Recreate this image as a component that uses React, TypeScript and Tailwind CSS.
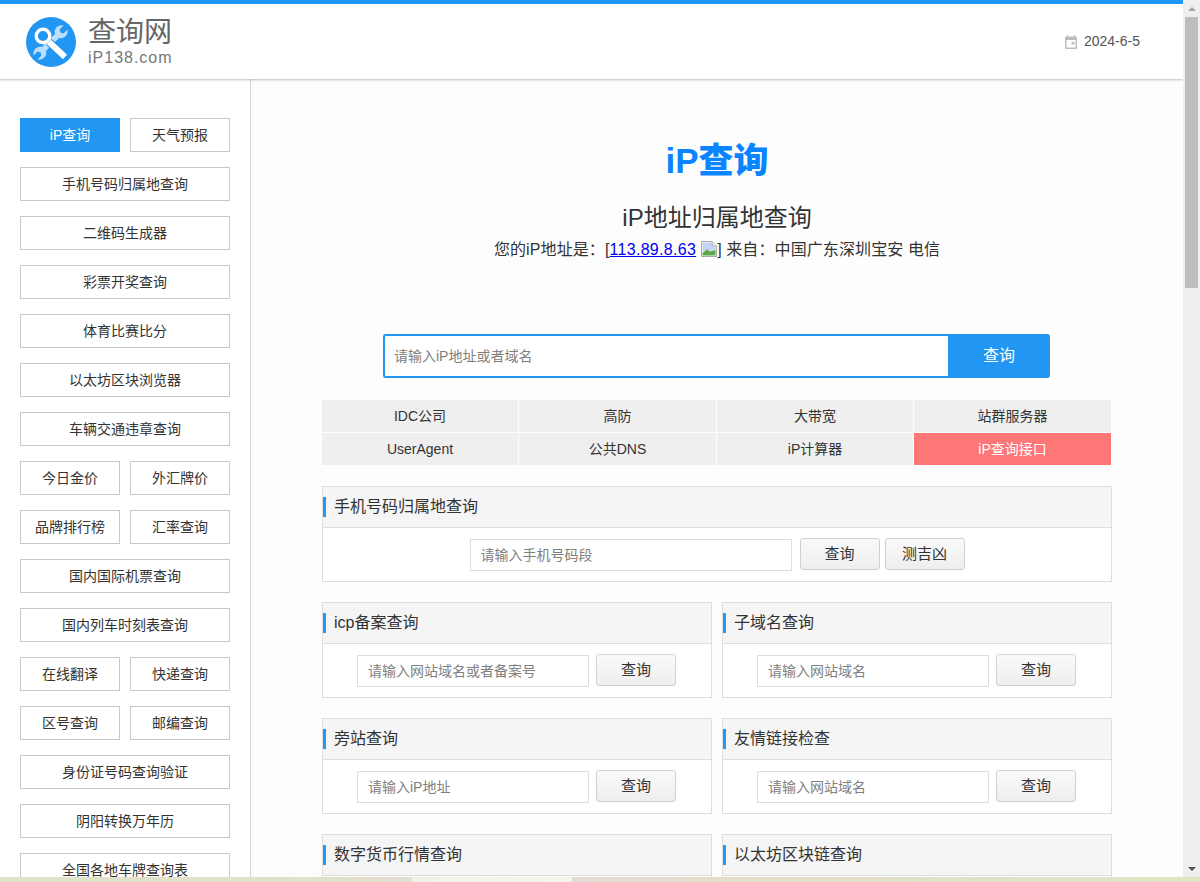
const font = "font-['Liberation_Sans','Noto_Sans_CJK_SC',sans-serif]";

function SideBtn({ text, active }: { text: string; active?: boolean }) {
  return (
    <a
      className={
        active
          ? "flex h-[34px] flex-1 items-center justify-center border border-[#2196f3] bg-[#2196f3] text-[14px] text-white"
          : "flex h-[34px] flex-1 items-center justify-center border border-[#c8c8c8] bg-white text-[14px] text-[#333]"
      }
    >
      {text}
    </a>
  );
}

const sideRows: { text: string; active?: boolean }[][] = [
  [{ text: "iP查询", active: true }, { text: "天气预报" }],
  [{ text: "手机号码归属地查询" }],
  [{ text: "二维码生成器" }],
  [{ text: "彩票开奖查询" }],
  [{ text: "体育比赛比分" }],
  [{ text: "以太坊区块浏览器" }],
  [{ text: "车辆交通违章查询" }],
  [{ text: "今日金价" }, { text: "外汇牌价" }],
  [{ text: "品牌排行榜" }, { text: "汇率查询" }],
  [{ text: "国内国际机票查询" }],
  [{ text: "国内列车时刻表查询" }],
  [{ text: "在线翻译" }, { text: "快递查询" }],
  [{ text: "区号查询" }, { text: "邮编查询" }],
  [{ text: "身份证号码查询验证" }],
  [{ text: "阴阳转换万年历" }],
  [{ text: "全国各地车牌查询表" }],
];

const links = [
  { text: "IDC公司" },
  { text: "高防" },
  { text: "大带宽" },
  { text: "站群服务器" },
  { text: "UserAgent" },
  { text: "公共DNS" },
  { text: "iP计算器" },
  { text: "iP查询接口", hot: true },
];

function QueryBtn({ text }: { text: string }) {
  return (
    <button className="h-8 w-20 rounded-[3px] border border-[#d0d0d0] bg-gradient-to-b from-[#fafafa] to-[#eeeeee] text-[15px] text-[#333]">
      {text}
    </button>
  );
}

function Box({
  title,
  placeholder,
  inputWidth,
  extra,
  wide,
}: {
  title: string;
  placeholder?: string;
  inputWidth?: string;
  extra?: string;
  wide?: boolean;
}) {
  return (
    <div className="flex-1 border border-[#dedede] bg-white">
      <div className="flex h-[41px] items-center border-b border-[#dedede] bg-[#f5f5f5]">
        <span className="h-5 w-[3px] bg-[#2196f3]" />
        <span className="ml-2 text-[16px] text-[#333]">{title}</span>
      </div>
      {/* last row sits below the fold, nothing of it shows */}
      {placeholder ? (
        <div className={wide ? "flex h-[53px] items-start justify-center" : "flex h-[53px] items-start justify-center pr-px"}>
          <div
            className={
              inputWidth +
              " mt-[11px] flex h-8 items-center border border-[#dedede] bg-white px-[10px] text-[14px] text-[#808080]"
            }
          >
            {placeholder}
          </div>
          <div className={wide ? "ml-2 mt-[10px] flex gap-[5px]" : "ml-[7px] mt-[10px] flex gap-[5px]"}>
            <QueryBtn text="查询" />
            {extra && <QueryBtn text={extra} />}
          </div>
        </div>
      ) : (
        <div className="h-[53px]" />
      )}
    </div>
  );
}

function Logo() {
  return (
    <svg width="50" height="50" viewBox="0 0 50 50">
      <circle cx="25" cy="25" r="25" fill="#2196f3" />
      {/* wrench */}
      <path
        d="M37.5 8.5 L33.5 12.5 L34.5 15.5 L37.5 16.5 L41.5 12.5 C42.5 18 38 22.5 33 21 L20 34 C21.5 39 17 43.5 11.5 42.5 L15.5 38.5 L14.5 35.5 L11.5 34.5 L7.5 38.5 C6.5 33 11 28.5 16 30 L29 17 C27.5 12 32 7.5 37.5 8.5 Z"
        fill="#bbdefb"
      />
      {/* magnifier */}
      <path d="M23 25 L39 40" stroke="#2196f3" strokeWidth="8" />
      <circle cx="17" cy="19" r="8.5" fill="#2196f3" />
      <circle cx="17" cy="19" r="6.8" fill="none" stroke="#fff" strokeWidth="3.4" />
      <path d="M23 25 L39 40" stroke="#fff" strokeWidth="6" />
    </svg>
  );
}

function BrokenImage() {
  return (
    <svg width="16" height="16" viewBox="0 0 16 16" className="ml-[5px] inline-block align-[-2px]">
      <path d="M.5.5H11L15.5 5V15.5H.5Z" fill="#fff" stroke="#a8a8a8" />
      <path d="M1.5 1.5H10.5V5.5H14.5V9L1.5 11Z" fill="#c4d3f3" />
      <path d="M1.5 14.5V12L6 8.5L9 10.5L14.5 9V14.5Z" fill="#5fa84a" />
      <path d="M11 .5V5H15.5" fill="#e8e8e8" stroke="#a8a8a8" />
    </svg>
  );
}

export default function App() {
  return (
    <div className={font + " relative flex h-[882px] w-[1200px] overflow-hidden bg-[#efefef]"}>
      <div className="h-[882px] w-[1183px] overflow-hidden bg-[#fdfdfd]">
        <header className="relative z-10 flex h-[79px] items-center justify-between border-t-4 border-[#2196f3] bg-white pl-[26px] pr-[43px] shadow-[0_1px_2px_rgba(0,0,0,0.25)]">
          <div className="flex items-center gap-[12px]">
            <Logo />
            <div className="flex flex-col">
              <span className="text-[28px] leading-[32px] text-[#666]">查询网</span>
              <span className="text-[16px] leading-[18px] tracking-[1px] text-[#777]">iP138.com</span>
            </div>
          </div>
          <div className="flex items-center gap-[7px] text-[14px] text-[#555]">
            <svg width="12" height="14" viewBox="0 0 12 14">
              <path d="M2.5 0V2M9.5 0V2" stroke="#bdbdbd" strokeWidth="1" />
              <rect x="0" y="1.5" width="12" height="12.5" rx="1" fill="#bdbdbd" />
              <rect x="1.5" y="5" width="9" height="7.5" fill="#fff" />
              <rect x="6.5" y="7" width="3" height="2.5" fill="#bdbdbd" />
            </svg>
            <span>2024-6-5</span>
          </div>
        </header>

        <div className="flex">
          <aside className="h-[803px] w-[251px] shrink-0 border-r border-[#d4d4d4] bg-white px-5 pt-[39px]">
            <div className="flex flex-col gap-[15px]">
              {sideRows.map((row, i) => (
                <div key={i} className="flex gap-[10px]">
                  {row.map((b) => (
                    <SideBtn key={b.text} text={b.text} active={b.active} />
                  ))}
                </div>
              ))}
            </div>
          </aside>

          <main className="flex-1 pt-[60px]">
            <div className="text-center text-[35px] font-black leading-[44px] text-[#0a84ff]">iP查询</div>
            <div className="mt-[19px] text-center text-[24px] leading-[32px] text-[#333]">iP地址归属地查询</div>
            <div className="mt-[5px] text-center text-[16px] leading-[22px] tracking-[0.1px] text-[#333]">
              您的iP地址是：[<a className="tracking-[0.3px] text-[#0000ee] underline">113.89.8.63</a>
              <BrokenImage />] 来自：中国广东深圳宝安 电信
            </div>

            <div className="mx-auto mt-[73px] w-[668px] pr-px">
              <div className="flex h-11">
                <div className="flex flex-1 items-center rounded-l-[3px] border-2 border-r-0 border-[#2196f3] bg-white px-[9px] text-[14px] text-[#808080]">
                  请输入iP地址或者域名
                </div>
                <button className="w-[102px] rounded-r-[3px] bg-[#2196f3] text-[16px] text-white">查询</button>
              </div>
            </div>

            <div className="mx-auto mt-[22px] w-[790px] pr-px">
              <div className="grid grid-cols-[196px_197px_196px_197px] gap-px">
                {links.map((l) => (
                  <a
                    key={l.text}
                    className={
                      l.hot
                        ? "flex h-8 items-center justify-center bg-[#ff7676] text-[14px] text-white"
                        : "flex h-8 items-center justify-center bg-[#efefef] text-[14px] text-[#333]"
                    }
                  >
                    {l.text}
                  </a>
                ))}
              </div>
            </div>

            <div className="mx-auto mt-[21px] flex w-[790px] flex-col gap-5">
              <Box title="手机号码归属地查询" placeholder="请输入手机号码段" inputWidth="w-[322px]" extra="测吉凶" wide />
              <div className="flex gap-[10px]">
                <Box title="icp备案查询" placeholder="请输入网站域名或者备案号" inputWidth="w-[232px]" />
                <Box title="子域名查询" placeholder="请输入网站域名" inputWidth="w-[232px]" />
              </div>
              <div className="flex gap-[10px]">
                <Box title="旁站查询" placeholder="请输入iP地址" inputWidth="w-[232px]" />
                <Box title="友情链接检查" placeholder="请输入网站域名" inputWidth="w-[232px]" />
              </div>
              <div className="flex gap-[10px]">
                <Box title="数字货币行情查询" />
                <Box title="以太坊区块链查询" />
              </div>
            </div>
          </main>
        </div>
      </div>

      {/* scrollbar */}
      <div className="flex h-[877px] w-[17px] shrink-0 flex-col items-center bg-[#efefef]">
        <div className="flex h-[17px] w-full items-center justify-center">
          <div className="h-0 w-0 border-x-[4px] border-b-[4px] border-x-transparent border-b-[#a3a3a3]" />
        </div>
        <div className="h-[271px] w-[13px] bg-[#bdbdbd]" />
        <div className="flex-1" />
        <div className="flex h-[17px] w-full items-center justify-center">
          <div className="h-0 w-0 border-x-[4px] border-t-[4px] border-x-transparent border-t-[#505050]" />
        </div>
      </div>

      {/* ad strip cut off by the window edge */}
      <div className="absolute bottom-0 left-0 z-20 flex h-[5px] w-full">
        <div className="w-[412px] bg-gradient-to-r from-[#dfe2c8] to-[#e3dfd0]" />
        <div className="w-[160px] bg-gradient-to-r from-[#f1f2e3] to-[#f4f3ee]" />
        <div className="flex-1 bg-gradient-to-r from-[#e3dcd0] to-[#e1e4c4]" />
      </div>
    </div>
  );
}
